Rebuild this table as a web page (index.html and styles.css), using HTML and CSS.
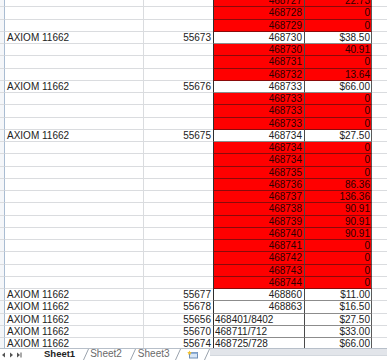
FILE: index.html
```html
<!DOCTYPE html>
<html>
<head>
<meta charset="utf-8">
<link rel="stylesheet" href="styles.css">
</head>
<body>
<div class="window">
  <div class="sheet">
    <div class="rows">
      <div class="row red"><div class="hd"></div><div class="a"></div><div class="b"></div><div class="c">468727</div><div class="d">22.73</div><div class="e"></div></div>
      <div class="row red"><div class="hd"></div><div class="a"></div><div class="b"></div><div class="c">468728</div><div class="d">0</div><div class="e"></div></div>
      <div class="row red"><div class="hd"></div><div class="a"></div><div class="b"></div><div class="c">468729</div><div class="d">0</div><div class="e"></div></div>
      <div class="row white"><div class="hd"></div><div class="a">AXIOM 11662</div><div class="b">55673</div><div class="c">468730</div><div class="d">$38.50</div><div class="e"></div></div>
      <div class="row red"><div class="hd"></div><div class="a"></div><div class="b"></div><div class="c">468730</div><div class="d">40.91</div><div class="e"></div></div>
      <div class="row red"><div class="hd"></div><div class="a"></div><div class="b"></div><div class="c">468731</div><div class="d">0</div><div class="e"></div></div>
      <div class="row red"><div class="hd"></div><div class="a"></div><div class="b"></div><div class="c">468732</div><div class="d">13.64</div><div class="e"></div></div>
      <div class="row white"><div class="hd"></div><div class="a">AXIOM 11662</div><div class="b">55676</div><div class="c">468733</div><div class="d">$66.00</div><div class="e"></div></div>
      <div class="row red"><div class="hd"></div><div class="a"></div><div class="b"></div><div class="c">468733</div><div class="d">0</div><div class="e"></div></div>
      <div class="row red"><div class="hd"></div><div class="a"></div><div class="b"></div><div class="c">468733</div><div class="d">0</div><div class="e"></div></div>
      <div class="row red"><div class="hd"></div><div class="a"></div><div class="b"></div><div class="c">468733</div><div class="d">0</div><div class="e"></div></div>
      <div class="row white"><div class="hd"></div><div class="a">AXIOM 11662</div><div class="b">55675</div><div class="c">468734</div><div class="d">$27.50</div><div class="e"></div></div>
      <div class="row red"><div class="hd"></div><div class="a"></div><div class="b"></div><div class="c">468734</div><div class="d">0</div><div class="e"></div></div>
      <div class="row red"><div class="hd"></div><div class="a"></div><div class="b"></div><div class="c">468734</div><div class="d">0</div><div class="e"></div></div>
      <div class="row red"><div class="hd"></div><div class="a"></div><div class="b"></div><div class="c">468735</div><div class="d">0</div><div class="e"></div></div>
      <div class="row red"><div class="hd"></div><div class="a"></div><div class="b"></div><div class="c">468736</div><div class="d">86.36</div><div class="e"></div></div>
      <div class="row red"><div class="hd"></div><div class="a"></div><div class="b"></div><div class="c">468737</div><div class="d">136.36</div><div class="e"></div></div>
      <div class="row red"><div class="hd"></div><div class="a"></div><div class="b"></div><div class="c">468738</div><div class="d">90.91</div><div class="e"></div></div>
      <div class="row red"><div class="hd"></div><div class="a"></div><div class="b"></div><div class="c">468739</div><div class="d">90.91</div><div class="e"></div></div>
      <div class="row red"><div class="hd"></div><div class="a"></div><div class="b"></div><div class="c">468740</div><div class="d">90.91</div><div class="e"></div></div>
      <div class="row red"><div class="hd"></div><div class="a"></div><div class="b"></div><div class="c">468741</div><div class="d">0</div><div class="e"></div></div>
      <div class="row red"><div class="hd"></div><div class="a"></div><div class="b"></div><div class="c">468742</div><div class="d">0</div><div class="e"></div></div>
      <div class="row red"><div class="hd"></div><div class="a"></div><div class="b"></div><div class="c">468743</div><div class="d">0</div><div class="e"></div></div>
      <div class="row red"><div class="hd"></div><div class="a"></div><div class="b"></div><div class="c">468744</div><div class="d">0</div><div class="e"></div></div>
      <div class="row white"><div class="hd"></div><div class="a">AXIOM 11662</div><div class="b">55677</div><div class="c">468860</div><div class="d">$11.00</div><div class="e"></div></div>
      <div class="row white"><div class="hd"></div><div class="a">AXIOM 11662</div><div class="b">55678</div><div class="c">468863</div><div class="d">$16.50</div><div class="e"></div></div>
      <div class="row white left"><div class="hd"></div><div class="a">AXIOM 11662</div><div class="b">55656</div><div class="c">468401/8402</div><div class="d">$27.50</div><div class="e"></div></div>
      <div class="row white left"><div class="hd"></div><div class="a">AXIOM 11662</div><div class="b">55670</div><div class="c">468711/712</div><div class="d">$33.00</div><div class="e"></div></div>
      <div class="row white left"><div class="hd"></div><div class="a">AXIOM 11662</div><div class="b">55674</div><div class="c">468725/728</div><div class="d">$66.00</div><div class="e"></div></div>
    </div>
  </div>
  <div class="tabbar">
    <svg class="nav" width="37" height="10" viewBox="0 0 37 10">
      <path d="M5 2.5 L2 5 L5 7.5 Z" fill="#555"/>
      <path d="M10 2.5 L13 5 L10 7.5 Z" fill="#555"/>
      <path d="M17 2.5 L20 5 L17 7.5 Z" fill="#555"/>
      <rect x="20.5" y="2.5" width="1" height="5" fill="#555"/>
    </svg>
    <div class="tab active">Sheet1</div>
    <svg class="slant" width="6" height="11" viewBox="0 0 6 11"><line x1="0.5" y1="11" x2="5.5" y2="0" stroke="#9aa3ad" stroke-width="1"/></svg>
    <div class="tab t2">Sheet2</div>
    <svg class="slant" width="6" height="11" viewBox="0 0 6 11"><line x1="0.5" y1="11" x2="5.5" y2="0" stroke="#9aa3ad" stroke-width="1"/></svg>
    <div class="tab t3">Sheet3</div>
    <svg class="slant" width="6" height="11" viewBox="0 0 6 11"><line x1="0.5" y1="11" x2="5.5" y2="0" stroke="#9aa3ad" stroke-width="1"/></svg>
    <svg class="ins" width="11" height="9" viewBox="0 0 11 9">
      <rect x="2.5" y="2.5" width="8" height="5.5" fill="#d7e6f7" stroke="#6f8fb5"/>
      <rect x="2.5" y="2.5" width="8" height="1.5" fill="#8fb0d8"/>
      <path d="M2.5 0.5 L3.2 2 L4.8 2.2 L3.6 3.2 L4 4.8 L2.5 4 L1 4.8 L1.4 3.2 L0.2 2.2 L1.8 2 Z" fill="#f2c12e"/>
    </svg>
    <svg class="slant last" width="6" height="11" viewBox="0 0 6 11"><line x1="0.5" y1="11" x2="5.5" y2="0" stroke="#9aa3ad" stroke-width="1"/></svg>
    <div class="scroll"></div>
  </div>
</div>
</body>
</html>
```
FILE: styles.css
```css
html, body {
  margin: 0;
  padding: 0;
  background: #ffffff;
}

.window {
  width: 387px;
  height: 364px;
  display: flex;
  flex-direction: column;
  overflow: hidden;
  font-family: "Liberation Sans", Arial, sans-serif;
  font-size: 10px;
  color: #222222;
}

.sheet {
  height: 348px;
  overflow: hidden;
  flex: none;
}

.rows {
  margin-top: -5px;
}

.row {
  display: grid;
  grid-template-columns: 5px 139px 69px 92px 67px 1fr;
  height: 12.25px;
}

.row > div {
  box-sizing: border-box;
  border-bottom: 1px solid #dadcdf;
  display: flex;
  align-items: center;
  line-height: 11px;
  white-space: nowrap;
  overflow: hidden;
}

.hd {
  border-right: 1px solid #a9bcd2;
  background: #f4f6f9;
}

.a {
  border-right: 1px solid #dadcdf;
  padding-left: 2px;
}

.b {
  justify-content: flex-end;
  padding-right: 2px;
}

.row > .c {
  justify-content: flex-end;
  padding-right: 2px;
  border-left: 1px solid #2e2e2e;
  border-right: 1px solid #4a4a4a;
}

.row > .d {
  justify-content: flex-end;
  padding-right: 1px;
  border-right: 1px solid #5a5a5a;
}

.red > .c,
.red > .d {
  background: #ff0000;
  color: #2a0000;
  border-bottom-color: #8a0a0a;
}

.white > .c,
.white > .d {
  background: #ffffff;
  border-bottom-color: #8c8c8c;
}

.left > .c {
  justify-content: flex-start;
  padding-left: 1px;
}

.tabbar {
  flex: 1;
  display: flex;
  align-items: flex-start;
  border-top: 1px solid #b7bfc9;
  background: #ffffff;
}

.nav {
  flex: none;
  margin-top: 1px;
}

.tab {
  height: 11px;
  line-height: 10px;
  font-size: 10px;
  color: #6a6a6a;
  flex: none;
}

.tab.active {
  font-weight: bold;
  font-size: 9.5px;
  color: #222222;
  padding-left: 7px;
  padding-right: 8px;
}

.tab.t2 {
  padding-left: 1px;
  padding-right: 8px;
}

.tab.t3 {
  padding-left: 2px;
  padding-right: 5px;
}

.slant {
  flex: none;
}

.ins {
  flex: none;
  margin: 1px 6px 0 6px;
}

.scroll {
  flex: 1;
  height: 6px;
  background: #e2e5ea;
  border-bottom: 1px solid #d3d8de;
}
```
